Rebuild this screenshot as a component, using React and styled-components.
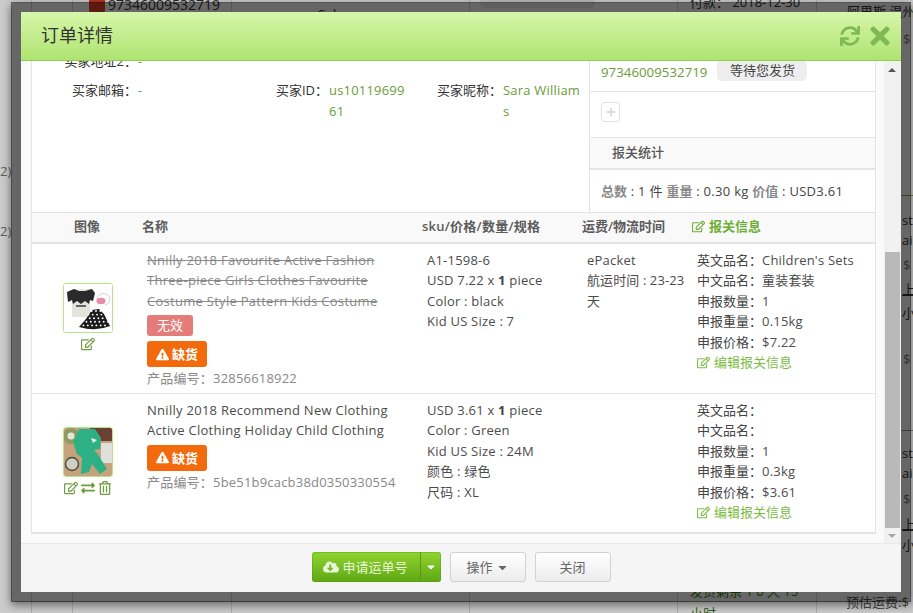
import React from "react";
import styled, { createGlobalStyle } from "styled-components";
import { FaSync, FaTimes, FaRegEdit, FaExchangeAlt, FaRegTrashAlt, FaExclamationTriangle, FaCloudDownloadAlt, FaCaretDown, FaPlus } from "react-icons/fa";

const Global = createGlobalStyle`
  html, body { margin: 0; padding: 0; background: #fff; }
  * { box-sizing: border-box; }
  body { font: 13px/1.57 "Open Sans", "Noto Sans CJK SC", sans-serif; color: #4c4c4c; }
`;

const Page = styled.div`
  position: relative; width: 913px; height: 613px; overflow: hidden; background: #fff;
`;
const BgGrid = styled.div`
  display: grid; height: 613px;
  grid-template-columns: 31px 41px 159px 238px 208px 139px 97px;
`;
const BgCell = styled.div`
  border-left: ${p => (p.$first ? "0" : "1px solid #ddd")};
  padding: ${p => p.$pad || "0"};
  color: #333; white-space: nowrap; overflow: hidden;
  display: flex; flex-direction: column; align-items: flex-start;
`;
const BgOrder = styled.div`
  display: flex; align-items: center; gap: 3px; margin-top: -6px; font-size: 14px;
`;
const BgRedIcon = styled.span`
  width: 16px; height: 16px; border-radius: 3px; background: #e8402a; display: block;
`;
const BgChip = styled.div`
  width: 115px; height: 8px; background: #eee; border-radius: 0 0 5px 5px;
`;
const BgLine = styled.div`
  margin-top: ${p => p.$top}px; margin-left: ${p => p.$indent || 0}px; line-height: 20px; color: ${p => p.$color || "#333"};
  text-decoration: ${p => (p.$under ? "underline" : "none")};
`;
const BgRule = styled.div`
  margin-top: ${p => p.$top}px; height: 1px; margin-left: -16px; flex: none;
  width: 120px; background: ${p => p.$color};
`;
const Backdrop = styled.div`
  position: absolute; inset: 0; background: rgba(0,0,0,.2);
`;
const Modal = styled.div`
  position: absolute; left: 11px; top: 2px; width: 900px; height: 600px;
  border: 10px solid rgba(0,0,0,.5); background-clip: padding-box; background-color: #fafafa;
  box-shadow: 0 3px 9px rgba(0,0,0,.5);
  display: flex; flex-direction: column;
`;
const Header = styled.div`
  height: 49px; flex: none; display: flex; align-items: center; padding: 0 7px 1px 20px;
  background: linear-gradient(#d6f6aa, #afe470); border-bottom: 1px solid #8ecf55;
`;
const Title = styled.div`
  font-size: 18px; color: #333; flex: 1;
`;
const HeaderIcon = styled.span`
  display: flex; color: #80b956; font-size: ${p => p.$size}px; margin-left: ${p => p.$gap || 0}px;
`;
const Body = styled.div`
  flex: 1; min-height: 0; display: flex;
`;
const Viewport = styled.div`
  flex: 1; min-width: 0; overflow: hidden; padding: 0 8px 0 10px;
`;
const Box = styled.div`
  margin-top: -30px; border: 1px solid #e4e4e4; border-top: 0; border-bottom-width: 2px; background: #fff;
`;
const Top = styled.div`
  display: flex; height: 181px;
`;
const Fields = styled.div`
  width: 557px; padding-top: 20px;
`;
const FieldRow = styled.div`
  display: flex; margin-bottom: 8px; line-height: 20px;
`;
const Label = styled.div`
  width: ${p => p.$w}px; flex: none; text-align: right; color: #333; margin-right: 1px; white-space: nowrap;
`;
const Value = styled.div`
  width: ${p => p.$w}px; flex: none; color: #6d9b3a; word-break: break-all; letter-spacing: .2px; line-height: 21px;
`;
const Side = styled.div`
  flex: 1; border-left: 1px solid #e4e4e4; display: flex; flex-direction: column;
`;
const TrackRow = styled.div`
  height: 61px; flex: none; border-bottom: 1px solid #e4e4e4; padding: 30px 0 0 11px;
  display: flex; gap: 10px; align-items: flex-start;
`;
const TrackNo = styled.span`
  color: #6d9b3a; font-size: 13.3px; line-height: 22px;
`;
const Status = styled.span`
  width: 90px; height: 21px; margin-top: -1px; border-radius: 5px; background: #eee; color: #444;
  text-align: center; line-height: 21px;
`;
const AddRow = styled.div`
  height: 46px; flex: none; border-bottom: 1px solid #e4e4e4; padding: 10px 0 0 11px;
`;
const AddBtn = styled.div`
  width: 19px; height: 20px; border: 1px solid #e2e2e2; border-radius: 3px; color: #dcdcdc;
  display: flex; align-items: center; justify-content: center; font-size: 10px;
`;
const SideHead = styled.div`
  height: 32px; flex: none; background: #f9f9f9; border-bottom: 2px solid #e4e4e4;
  padding-left: 22px; line-height: 29px; font-weight: 500; color: #555;
`;
const Totals = styled.div`
  flex: 1; padding: 11px 0 0 11px; color: #444; white-space: nowrap; letter-spacing: .3px;
`;
const TotalKey = styled.b`
  color: #8a8a8a; font-weight: 700; letter-spacing: 0;
`;
const HeadRow = styled.div`
  display: grid; grid-template-columns: 68px 280px 160px 110px 1fr; padding-left: 42px;
  height: 32px; line-height: 27px; background: #f9f9f9;
  border-top: 1px solid #e4e4e4; border-bottom: 2px solid #e4e4e4; color: #5c5c5c; font-weight: 600;
`;
const HeadSku = styled.div`
  letter-spacing: .25px;
`;
const HeadGreen = styled.div`
  color: #6fae36; display: flex; align-items: center; gap: 4px; font-size: 13px; padding-bottom: 3px;
`;
const Row = styled.div`
  display: grid; grid-template-columns: 115px 280px 160px 110px 1fr; height: ${p => p.$h}px;
  padding-top: 6px; border-bottom: ${p => (p.$last ? "0" : "1px solid #e4e4e4")};
`;
const ImageCell = styled.div`
  display: flex; flex-direction: column; align-items: center; justify-content: center;
  padding: 0 0 4px; width: 112px; margin-top: -6px;
`;
const Thumb = styled.div`
  width: 50px; height: 50px; border: 1px solid #b5e38a; border-radius: 3px; overflow: hidden; background: #fff; display: flex;
`;
const ImageTools = styled.div`
  display: flex; gap: 3px; align-items: center; margin-top: 4px; font-size: 14px; color: #6f9c3f; height: 14px;
`;
const NameCell = styled.div`
  min-width: 0;
`;
const Name = styled.div`
  width: 250px;
  letter-spacing: .28px;
  color: ${p => (p.$off ? "#888" : "#4c4c4c")};
  text-decoration: ${p => (p.$off ? "line-through" : "none")};
`;
const Invalid = styled.div`
  width: 46px; height: 21px; margin-top: 4px; border-radius: 3px; background: #e47d7a; color: #fff;
  text-align: center; line-height: 21px;
`;
const Stock = styled.div`
  width: 60px; height: 26px; margin-top: ${p => p.$top}px; border-radius: 3px; background: #f26a0c; color: #fff;
  display: flex; align-items: center; justify-content: center; gap: 3px; font-weight: 600;
`;
const ProductNo = styled.div`
  color: #888; margin-top: 1px; white-space: nowrap; font-size: 13px; letter-spacing: .2px;
`;
const Cell = styled.div`
  min-width: 0;
`;
const Line = styled.div`
  white-space: nowrap; letter-spacing: .22px;
`;
const ShipText = styled.div`
  letter-spacing: .1px;
`;
const Qty = styled.b`
  color: #444;
`;
const CustomLine = styled.div`
  display: flex; white-space: nowrap;
`;
const CustomKey = styled.span`
  width: 65px; flex: none; color: #444;
`;
const CustomValue = styled.span`
  letter-spacing: .2px;
`;
const EditLink = styled.div`
  color: #7cbc45; display: flex; align-items: center; gap: 4px;
`;
const Scrollbar = styled.div`
  width: 17px; flex: none; background: #f1f1f1; display: flex; flex-direction: column; align-items: center; padding-right: 1px;
`;
const Arrow = styled.div`
  width: 0; height: 0; flex: none; border-left: 4px solid transparent; border-right: 4px solid transparent;
  margin-top: ${p => p.$top}px;
  ${p => (p.$up ? "border-bottom: 4px solid #555;" : "border-top: 4px solid #a5a5a5;")}
`;
const Thumbbar = styled.div`
  width: 15px; height: 276px; flex: none; margin-top: 180px; background: #b9b9b9;
`;
const Footer = styled.div`
  height: 49px; flex: none; background: #f5f5f5; border-top: 1px solid #e9e9e9;
  display: flex; justify-content: center; align-items: flex-start; padding-top: 8px; gap: 9px;
`;
const Split = styled.div`
  display: flex; width: 129px; height: 30px; border-radius: 3px; overflow: hidden; color: #eaf6da;
  background: linear-gradient(#90d42f, #5fa714); box-shadow: inset 0 0 0 1px rgba(80,140,20,.35);
`;
const SplitMain = styled.div`
  flex: 1; display: flex; align-items: center; justify-content: center; gap: 3px; font-size: 13px;
`;
const CloudIcon = styled(FaCloudDownloadAlt)`
  font-size: 16px;
`;
const SplitCaret = styled.div`
  width: 21px; border-left: 1px solid #5a9a18; display: flex; align-items: center; justify-content: center; color: #fff; font-size: 12px;
`;
const GrayButton = styled.div`
  width: 76px; height: 30px; border: 1px solid #d2d2d2; border-radius: 3px; color: #666;
  background: linear-gradient(#fff, #ececec); display: flex; align-items: center; justify-content: center; gap: 3px;
`;
const Svg = styled.svg`
  width: 100%; height: 100%; display: block;
`;

const dots = [];
for (let r = 0; r < 5; r++) {
  for (let c = 0; c < 7; c++) {
    dots.push([17 + c * 4.3 + r * 0.3 + (5 - r) * 1.6 * 0.8 + (r % 2) * 2, 27 + r * 3.6]);
  }
}

const Dress = () => (
  <Svg viewBox="0 0 48 48">
    <defs><filter id="soft1"><feGaussianBlur stdDeviation=".35" /></filter></defs>
    <rect width="48" height="48" fill="#fff" />
    <g filter="url(#soft1)">
      <path d="M3 8 L10 5 L28 5 L31 9 L29 17 L26 16 L26 33 L8 33 L8 16 L4 18Z" fill="#e6e2dc" />
      <path d="M3 8 L10 5 L15 7 L21 7 L28 5 L31 9 L29 17 L26 16 L25 20 L21 17 L17 20 L13 17 L9 20 L8 16 L4 18Z" fill="#2b2b2b" />
      <rect x="12" y="21" width="10" height="2" fill="#666" />
      <ellipse cx="37" cy="17" rx="4.5" ry="3.2" fill="#e88aa8" />
      <path d="M32 15 Q38 5 46 13 Q46 20 41 21" fill="none" stroke="#ccc" strokeWidth=".9" />
      <path d="M28 26 L35 25 L40 30 L46 42 Q32 48 15 43 Q22 36 28 26Z" fill="#1a1a1a" />
      <g fill="#fff">
        {dots.filter(d => d[0] < 45 && d[0] > 16 + (45 - d[1]) * 0.55).map((d, i) => <circle key={i} cx={d[0]} cy={d[1]} r=".95" />)}
      </g>
    </g>
  </Svg>
);

const Outfit = () => (
  <Svg viewBox="0 0 48 48">
    <defs><filter id="soft2"><feGaussianBlur stdDeviation=".5" /></filter></defs>
    <rect width="48" height="48" fill="#c4a27c" />
    <g filter="url(#soft2)">
      <rect x="26" y="0" width="22" height="13" fill="#6a4030" />
      <rect x="37" y="15" width="11" height="20" fill="#dfe0dc" />
      <circle cx="7" cy="8" r="8" fill="#8f9a62" />
      <circle cx="7" cy="8" r="3.5" fill="#e6e6d5" />
      <circle cx="8" cy="36" r="6.5" fill="#cfcfc4" stroke="#4a4a44" strokeWidth="1.4" />
      <path d="M15 1 L31 1 L37 10 L36 21 L30 22 L33 25 L43 41 L36 46 L28 36 L25 44 L17 46 L18 30 L13 26 L9 14Z" fill="#2fb085" />
      <path d="M27 10 L33 12 L29 15Z" fill="#e8f4ee" />
    </g>
  </Svg>
);

function App() {
  return (
    <Page>
      <Global />
      <BgGrid>
        <BgCell $first>
          <BgLine $top={161} $color="#777">2)</BgLine>
          <BgLine $top={40} $color="#777">2)</BgLine>
        </BgCell>
        <BgCell />
        <BgCell $pad="0 0 0 16px"><BgOrder><BgRedIcon />97346009532719</BgOrder></BgCell>
        <BgCell $pad="0 0 0 85px"><BgLine $top={-16}>shanxi 4008 0</BgLine><BgLine $top={0}>Cologne</BgLine></BgCell>
        <BgCell $pad="0 0 0 10px"><BgChip /></BgCell>
        <BgCell $pad="0 0 0 12px">
          <BgLine $top={-8}>付款： 2018-12-30</BgLine>
          <BgLine $top={569} $color="#3d7a10">发货剩余 1 0 天 15</BgLine>
          <BgLine $top={2} $color="#3d7a10">小时</BgLine>
        </BgCell>
        <BgCell $pad="0 0 0 14px">
          <BgLine $top={1} $indent={16}>阿里斯 温州</BgLine>
          <BgLine $top={8} $color="#777" $indent={72}>$</BgLine>
          <BgRule $top={146} $color="#7faa4a" />
          <BgLine $top={14} $indent={71}>st</BgLine>
          <BgLine $top={0} $indent={71}>ail</BgLine>
          <BgLine $top={5} $color="#777" $indent={72}>$</BgLine>
          <BgLine $top={4} $under $indent={71}>上海</BgLine>
          <BgLine $top={4} $indent={71}>小时</BgLine>
          <BgLine $top={26} $color="#777" $indent={72}>$ 1</BgLine>
          <BgRule $top={61} $color="#999" />
          <BgLine $top={12} $indent={71}>st</BgLine>
          <BgLine $top={0} $indent={71}>ail</BgLine>
          <BgLine $top={6} $color="#777" $indent={72}>$</BgLine>
          <BgLine $top={5} $under $indent={71}>上海</BgLine>
          <BgLine $top={1} $indent={71}>小时</BgLine>
          <BgLine $top={37} $color="#555" $indent={15}>预估运费:$ 1</BgLine>
        </BgCell>
      </BgGrid>
      <Backdrop />
      <Modal>
        <Header>
          <Title>订单详情</Title>
          <HeaderIcon $size={20}><FaSync /></HeaderIcon>
          <HeaderIcon $size={28} $gap={6}><FaTimes /></HeaderIcon>
        </Header>
        <Body>
          <Viewport>
            <Box>
              <Top>
                <Fields>
                  <FieldRow><Label $w={105}>买家地址2：</Label><Value $w={127}>-</Value></FieldRow>
                  <FieldRow>
                    <Label $w={105}>买家邮箱：</Label><Value $w={127}>-</Value>
                    <Label $w={63}>买家ID：</Label><Value $w={80}>us1011969961</Value>
                    <Label $w={93}>买家昵称：</Label><Value $w={80}>Sara Williams</Value>
                  </FieldRow>
                </Fields>
                <Side>
                  <TrackRow><TrackNo>97346009532719</TrackNo><Status>等待您发货</Status></TrackRow>
                  <AddRow><AddBtn><FaPlus /></AddBtn></AddRow>
                  <SideHead>报关统计</SideHead>
                  <Totals>
                    <TotalKey>总数</TotalKey> : 1 件 <TotalKey>重量</TotalKey> : 0.30 kg <TotalKey>价值</TotalKey> : USD3.61
                  </Totals>
                </Side>
              </Top>
              <HeadRow>
                <div>图像</div><div>名称</div><HeadSku>sku/价格/数量/规格</HeadSku><div>运费/物流时间</div>
                <HeadGreen><FaRegEdit />报关信息</HeadGreen>
              </HeadRow>
              <Row $h={150}>
                <ImageCell>
                  <Thumb><Dress /></Thumb>
                  <ImageTools><FaRegEdit /></ImageTools>
                </ImageCell>
                <NameCell>
                  <Name $off>Nnilly 2018 Favourite Active Fashion Three-piece Girls Clothes Favourite Costume Style Pattern Kids Costume</Name>
                  <Invalid>无效</Invalid>
                  <Stock $top={5}><FaExclamationTriangle />缺货</Stock>
                  <ProductNo>产品编号：32856618922</ProductNo>
                </NameCell>
                <Cell>
                  <Line>A1-1598-6</Line>
                  <Line>USD 7.22 x <Qty>1</Qty> piece</Line>
                  <Line>Color : black</Line>
                  <Line>Kid US Size : 7</Line>
                </Cell>
                <Cell>
                  <Line>ePacket</Line>
                  <ShipText>航运时间 : 23-23 天</ShipText>
                </Cell>
                <Cell>
                  <CustomLine><CustomKey>英文品名：</CustomKey><CustomValue>Children's Sets</CustomValue></CustomLine>
                  <CustomLine><CustomKey>中文品名：</CustomKey><CustomValue>童装套装</CustomValue></CustomLine>
                  <CustomLine><CustomKey>申报数量：</CustomKey><CustomValue>1</CustomValue></CustomLine>
                  <CustomLine><CustomKey>申报重量：</CustomKey><CustomValue>0.15kg</CustomValue></CustomLine>
                  <CustomLine><CustomKey>申报价格：</CustomKey><CustomValue>$7.22</CustomValue></CustomLine>
                  <EditLink><FaRegEdit />编辑报关信息</EditLink>
                </Cell>
              </Row>
              <Row $h={138} $last>
                <ImageCell>
                  <Thumb><Outfit /></Thumb>
                  <ImageTools><FaRegEdit /><FaExchangeAlt /><FaRegTrashAlt /></ImageTools>
                </ImageCell>
                <NameCell>
                  <Name>Nnilly 2018 Recommend New Clothing Active Clothing Holiday Child Clothing</Name>
                  <Stock $top={4}><FaExclamationTriangle />缺货</Stock>
                  <ProductNo>产品编号：5be51b9cacb38d0350330554</ProductNo>
                </NameCell>
                <Cell>
                  <Line>USD 3.61 x <Qty>1</Qty> piece</Line>
                  <Line>Color : Green</Line>
                  <Line>Kid US Size : 24M</Line>
                  <Line>颜色 : 绿色</Line>
                  <Line>尺码 : XL</Line>
                </Cell>
                <Cell />
                <Cell>
                  <CustomLine><CustomKey>英文品名：</CustomKey></CustomLine>
                  <CustomLine><CustomKey>中文品名：</CustomKey></CustomLine>
                  <CustomLine><CustomKey>申报数量：</CustomKey><CustomValue>1</CustomValue></CustomLine>
                  <CustomLine><CustomKey>申报重量：</CustomKey><CustomValue>0.3kg</CustomValue></CustomLine>
                  <CustomLine><CustomKey>申报价格：</CustomKey><CustomValue>$3.61</CustomValue></CustomLine>
                  <EditLink><FaRegEdit />编辑报关信息</EditLink>
                </Cell>
              </Row>
            </Box>
          </Viewport>
          <Scrollbar>
            <Arrow $up $top={7} />
            <Thumbbar />
            <Arrow $top={6} />
          </Scrollbar>
        </Body>
        <Footer>
          <Split>
            <SplitMain><CloudIcon />申请运单号</SplitMain>
            <SplitCaret><FaCaretDown /></SplitCaret>
          </Split>
          <GrayButton>操作<FaCaretDown /></GrayButton>
          <GrayButton>关闭</GrayButton>
        </Footer>
      </Modal>
    </Page>
  );
}

export default App;
